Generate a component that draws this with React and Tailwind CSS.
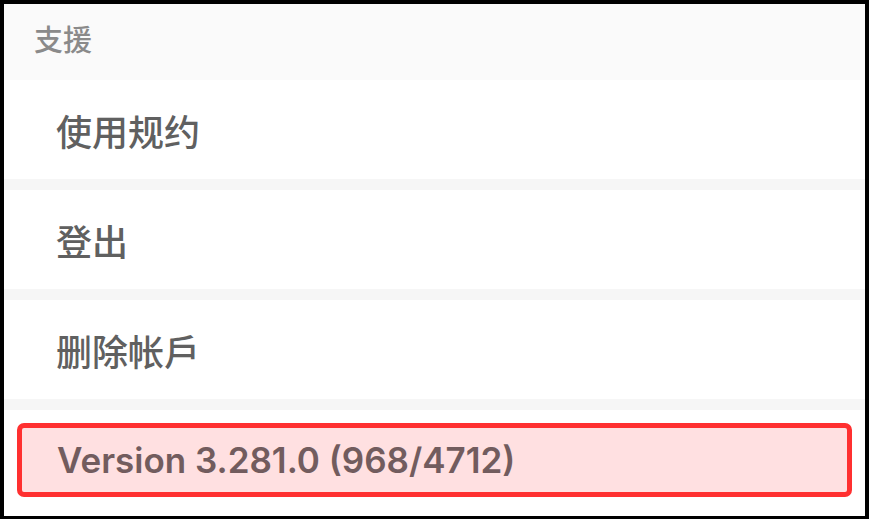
import React from "react";

const rows = ["使用规约", "登出", "删除帐戶"];

const Divider = () => <div className="h-[11px] bg-[#f6f6f6]" />;

const App = () => {
  return (
    <div className="w-[869px] h-[519px] bg-black pt-[4px] pl-[4px] pr-[4px] pb-[3px]">
      <div
        className="flex flex-col h-full bg-white"
        style={{ fontFamily: '"Noto Sans CJK TC", "Noto Sans CJK SC", sans-serif' }}
      >
        <div className="h-[76px] bg-[#fafafa] pl-[30px] pb-[8px] flex items-center">
          <span className="text-[29px] leading-none text-[#8a8a8a] font-medium">支援</span>
        </div>
        {rows.map((label) => (
          <React.Fragment key={label}>
            <div className="h-[99px] pl-[52px] flex items-center">
              <span className="text-[36px] leading-none text-[#606060] font-medium">{label}</span>
            </div>
            <Divider />
          </React.Fragment>
        ))}
        <div className="flex-1 pt-[13px] px-[13px]">
          <div className="h-[74px] border-[5px] border-[#ff3030] rounded-[7px] bg-[#ffe0e1] pl-[35px] flex items-center">
            <span className="font-['Inter',sans-serif] text-[35px] leading-none text-[#725c5e] font-semibold">
              Version 3.281.0 (968/4712)
            </span>
          </div>
        </div>
      </div>
    </div>
  );
};

export default App;
